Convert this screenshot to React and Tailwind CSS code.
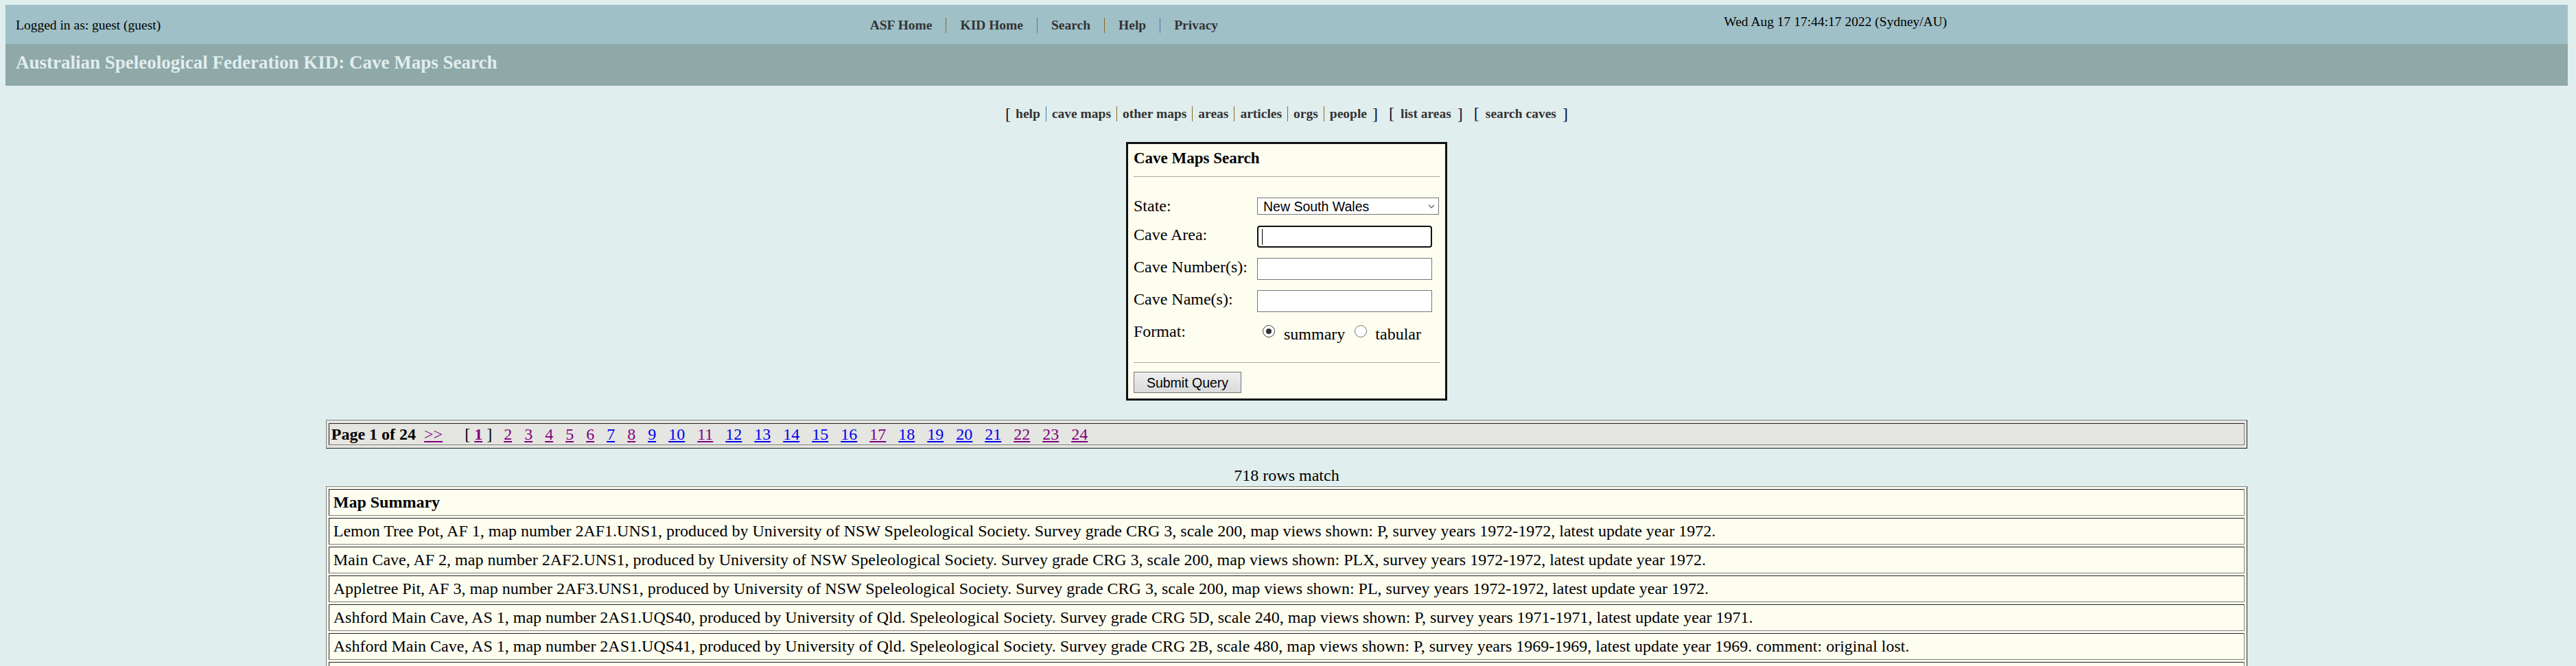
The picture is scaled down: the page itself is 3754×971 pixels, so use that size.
import React from "react";

const navLinks = [
	{ label: "ASF Home", sep: "" },
	{ label: "KID Home", sep: "border-[#8a6a1c]" },
	{ label: "Search", sep: "border-[#3f7fa8]" },
	{ label: "Help", sep: "border-[#8a6a1c]" },
	{ label: "Privacy", sep: "border-[#3f7fa8]" }
];

const kidLinks = [
	{ label: "help", sep: "" },
	{ label: "cave maps", sep: "border-[#3f7fa8]" },
	{ label: "other maps", sep: "border-[#8a6a1c]" },
	{ label: "areas", sep: "border-[#8a6a1c]" },
	{ label: "articles", sep: "border-[#8a6a1c]" },
	{ label: "orgs", sep: "border-[#8a6a1c]" },
	{ label: "people", sep: "border-[#8a6a1c]" }
];

// pages already visited show in purple
const visited = [2, 3, 4, 5, 6, 8, 11, 17, 22, 23, 24];

const rows = [
	"Lemon Tree Pot, AF 1, map number 2AF1.UNS1, produced by University of NSW Speleological Society. Survey grade CRG 3, scale 200, map views shown: P, survey years 1972-1972, latest update year 1972.",
	"Main Cave, AF 2, map number 2AF2.UNS1, produced by University of NSW Speleological Society. Survey grade CRG 3, scale 200, map views shown: PLX, survey years 1972-1972, latest update year 1972.",
	"Appletree Pit, AF 3, map number 2AF3.UNS1, produced by University of NSW Speleological Society. Survey grade CRG 3, scale 200, map views shown: PL, survey years 1972-1972, latest update year 1972.",
	"Ashford Main Cave, AS 1, map number 2AS1.UQS40, produced by University of Qld. Speleological Society. Survey grade CRG 5D, scale 240, map views shown: P, survey years 1971-1971, latest update year 1971.",
	"Ashford Main Cave, AS 1, map number 2AS1.UQS41, produced by University of Qld. Speleological Society. Survey grade CRG 2B, scale 480, map views shown: P, survey years 1969-1969, latest update year 1969. comment: original lost.",
	"Ashford Main Cave, AS 1, map number 2AS1.UQS42, produced by University of Qld. Speleological Society. Survey grade CRG 2B, scale 480, map views shown: P, survey years 1969-1969, latest update year 1969."
];

const TopBar = () => (
	<div className="grid h-[57px] grid-cols-3 items-center bg-[#9fc0c7] pt-[2px] text-[19.5px] leading-[22px]">
		<div className="pl-[15px]">Logged in as: guest (guest)</div>
		<div className="flex items-center pl-[15px] font-bold text-[#333]">
			{navLinks.map((l, i) => (
				<span
					key={l.label}
					className={i === 0 ? "pr-[20px]" : `border-l px-[20px] ${l.sep}`}
				>
					{l.label}
				</span>
			))}
		</div>
		<div className="self-start pl-[15px] pt-[12px]">
			Wed Aug 17 17:44:17 2022 (Sydney/AU)
		</div>
	</div>
);

const Bracket = ({ children }) => (
	<span className="text-[24px] font-normal leading-[22px] text-[#101030]">
		{children}
	</span>
);

const SubNav = () => (
	<div className="mt-[30px] flex h-[22px] items-center justify-center text-[19.5px] font-bold leading-[22px] text-[#333]">
		<Bracket>[</Bracket>
		{kidLinks.map((l) => (
			<span
				key={l.label}
				className={`px-[8px] ${l.sep ? `border-l ${l.sep}` : "pl-[7px]"}`}
			>
				{l.label}
			</span>
		))}
		<Bracket>]</Bracket>
		<span className="ml-[16px]">
			<Bracket>[</Bracket>
		</span>
		<span className="px-[9px]">list areas</span>
		<Bracket>]</Bracket>
		<span className="ml-[16px]">
			<Bracket>[</Bracket>
		</span>
		<span className="px-[9px]">search caves</span>
		<Bracket>]</Bracket>
	</div>
);

const Label = ({ children, up }) => (
	<span
		className={`w-[180px] shrink-0 text-[24px] leading-[27px] ${
			up ? "mb-[6px]" : ""
		}`}
	>
		{children}
	</span>
);

const TextBox = ({ focused }) =>
	focused ? (
		<div className="flex h-[32px] w-[255px] items-center rounded-[4px] border-2 border-[#101010] bg-white pl-[5px]">
			<span className="h-[23px] w-px bg-black" />
		</div>
	) : (
		<div className="h-[32px] w-[255px] border border-[#767676] bg-white" />
	);

const Radio = ({ checked }) =>
	checked ? (
		<span className="flex h-[18px] w-[18px] shrink-0 items-center justify-center rounded-full border-[1.5px] border-[#444] bg-white">
			<span className="h-[8px] w-[8px] rounded-full bg-[#333]" />
		</span>
	) : (
		<span className="block h-[18px] w-[18px] shrink-0 rounded-full border border-[#767676] bg-white" />
	);

const SearchForm = () => (
	<div className="mx-auto mt-[30px] w-[468px] border-[3px] border-[#111] bg-[#fdfdf0] p-[8px]">
		<h3 className="text-[23px] font-bold leading-[26px]">Cave Maps Search</h3>
		<div className="mt-[13px] h-px bg-[#a8a8a8]" />

		<div className="mt-[29px] flex h-[27px] items-center">
			<Label>State:</Label>
			<div className="flex h-[25px] w-[265px] items-center justify-between border border-[#767676] bg-white pl-[8px] pr-[5px] font-['Liberation_Sans',Arial,sans-serif] text-[19.5px] leading-[22px]">
				<span>New South Wales</span>
				<svg width="10" height="6" viewBox="0 0 10 6" fill="none">
					<path d="M1 1l4 4 4-4" stroke="#555" strokeWidth="1.2" />
				</svg>
			</div>
		</div>

		<div className="mt-[13px] flex h-[36px] items-center">
			<Label up>Cave Area:</Label>
			<TextBox focused />
		</div>
		<div className="mt-[11px] flex h-[36px] items-center">
			<Label up>Cave Number(s):</Label>
			<TextBox />
		</div>
		<div className="mt-[11px] flex h-[36px] items-center">
			<Label up>Cave Name(s):</Label>
			<TextBox />
		</div>

		<div className="mt-[8px] flex h-[36px] items-center">
			<Label>Format:</Label>
			<div className="ml-[8px] flex items-center text-[24px] leading-[27px]">
				<Radio checked />
				<span className="ml-[13px] mt-[8px]">summary</span>
				<span className="ml-[14px] flex items-center">
					<Radio />
				</span>
				<span className="ml-[12px] mt-[8px]">tabular</span>
			</div>
		</div>

		<div className="mt-[27px] h-px bg-[#a8a8a8]" />
		<button className="mt-[13px] flex h-[31px] w-[157px] items-center justify-center border border-[#767676] bg-gradient-to-b from-[#efefef] to-[#dadada] font-['Liberation_Sans',Arial,sans-serif] text-[19.5px] leading-[22px] text-black">
			Submit Query
		</button>
	</div>
);

const Pager = () => (
	<div className="mx-auto mt-[28px] w-3/4 border border-b-[#222] border-l-[#808080] border-r-[#222] border-t-[#808080] bg-[#e5e5e1] px-[3px] py-[4px]">
		<div className="flex items-baseline border border-b-[#808080] border-l-[#222] border-r-[#808080] border-t-[#222] px-[3px] py-[1px] text-[24px] leading-[28px]">
			<b>Page 1 of 24</b>
			<a className="ml-[12px] text-[#800080] underline">&gt;&gt;</a>
			<span className="ml-[32px]">[</span>
			<a className="ml-[6px] font-bold text-[#800080] underline">1</a>
			<span className="ml-[6px]">]</span>
			{Array.from({ length: 23 }, (_, i) => i + 2).map((n) => (
				<a
					key={n}
					className={`${n === 2 ? "ml-[17px]" : "ml-[18px]"} underline ${
						visited.includes(n) ? "text-[#800080]" : "text-[#0000ee]"
					}`}
				>
					{n}
				</a>
			))}
		</div>
	</div>
);

const Cell = ({ children, bold }) => (
	<div
		className={`border border-b-[#808080] border-l-[#222] border-r-[#808080] border-t-[#222] px-[6px] py-[5px] text-[24px] leading-[27px] whitespace-nowrap ${
			bold ? "font-bold" : ""
		}`}
	>
		{children}
	</div>
);

const Results = () => (
	<div className="mx-auto mt-[2px] flex w-3/4 flex-col gap-[3px] border border-b-[#222] border-l-[#808080] border-r-[#222] border-t-[#808080] bg-[#fdfdf0] p-[3px]">
		<Cell bold>Map Summary</Cell>
		{rows.map((r) => (
			<Cell key={r}>{r}</Cell>
		))}
	</div>
);

export default function App() {
	return (
		<div className="min-h-screen bg-[#e0eeee] pb-[8px] pl-[8px] pr-[12px] pt-[7px] font-['Liberation_Serif','Times_New_Roman',serif] text-black">
			<TopBar />
			<div className="flex h-[61px] items-center bg-[#8fa8a8] pb-[6px] pl-[15px]">
				<h1 className="text-[27px] font-bold leading-[31px] text-[#e0eeee]">
					Australian Speleological Federation KID: Cave Maps Search
				</h1>
			</div>
			<SubNav />
			<SearchForm />
			<Pager />
			<p className="mt-[26px] text-center text-[24px] leading-[27px]">
				718 rows match
			</p>
			<Results />
		</div>
	);
}
